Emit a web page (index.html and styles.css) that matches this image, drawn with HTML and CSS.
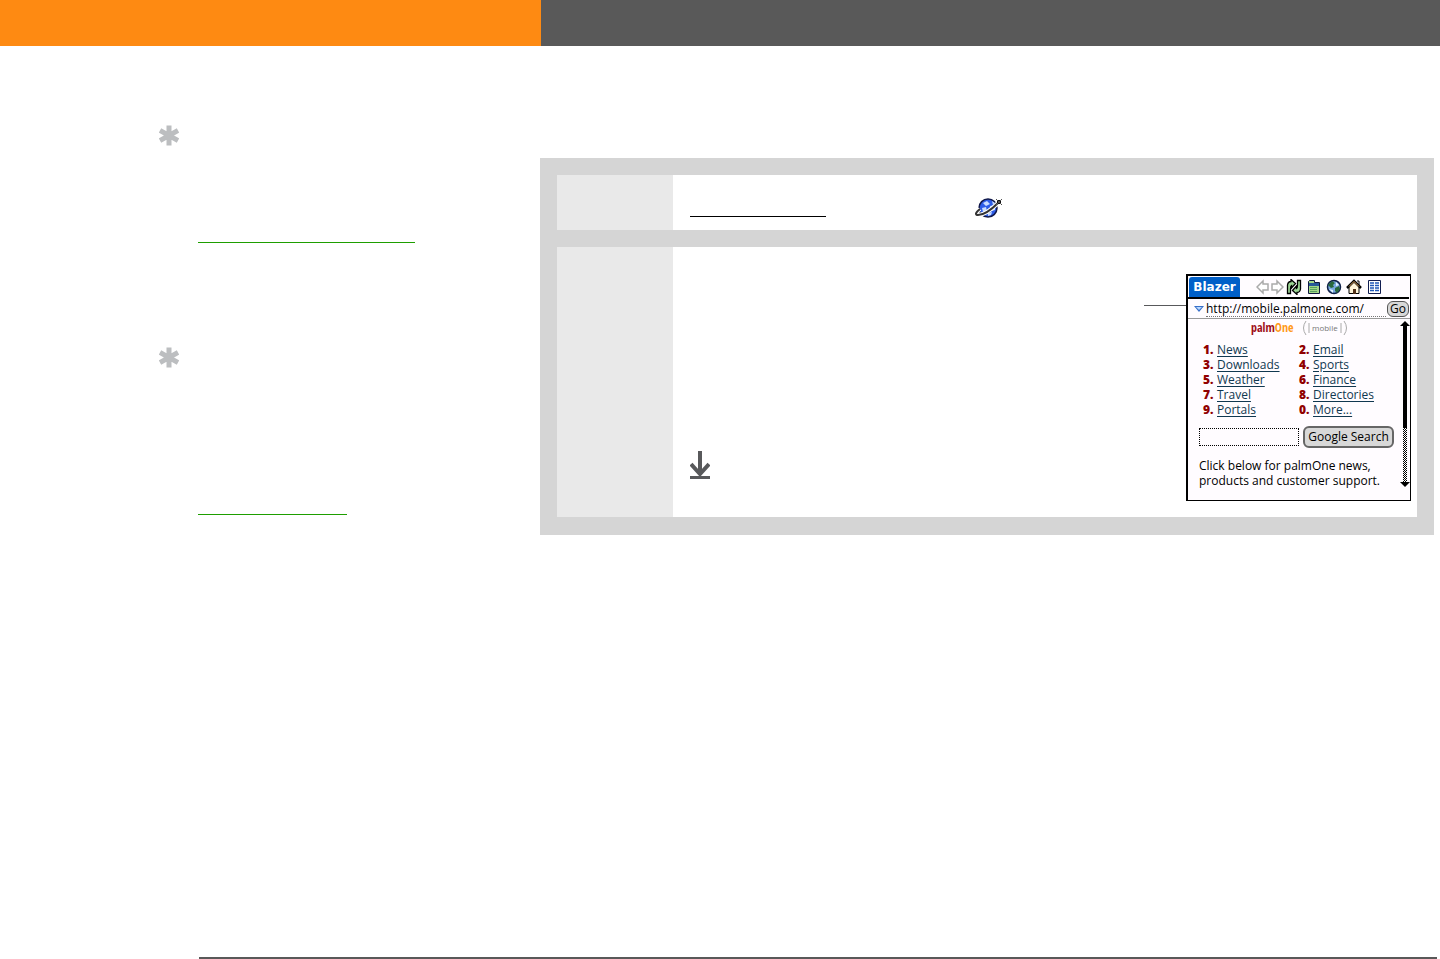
FILE: index.html
```html
<!DOCTYPE html>
<html lang="en">
<head>
    <meta charset="UTF-8">
    <meta name="viewport" content="width=device-width, initial-scale=1.0">
    <title>Blazer</title>
    <link rel="stylesheet" href="styles.css">
</head>
<body>
    <header class="top-bar">
        <div class="top-left"></div>
        <div class="top-right"></div>
    </header>

    <main class="content">
        <aside class="notes">
            <section class="note">
                <svg class="star" viewBox="0 0 20 20"><path d="M10 0V20M1 5L19 15M19 5L1 15"/></svg>
                <div class="note-link"></div>
            </section>
            <section class="note">
                <svg class="star" viewBox="0 0 20 20"><path d="M10 0V20M1 5L19 15M19 5L1 15"/></svg>
                <div class="note-link short"></div>
            </section>
        </aside>

        <div class="steps">
            <section class="step">
                <div class="step-label"></div>
                <div class="step-body first">
                    <div class="term-line"></div>
                    <svg class="web-icon" viewBox="0 0 28 22">
                        <circle cx="13" cy="11" r="9" fill="#2c5ce8" stroke="#10184a" stroke-width="1.5"/>
                        <path d="M8 6l4-2 3 3-4 2zM15 9l5-1 0 5-4 1zM7 11l4-1 1 4-4 1zM17 4l3 2-2 2zM13 16l4-1-1 3-3 1z" fill="#c8dcff"/>
                        <path d="M5 12C0 16 0 18 3 18C9 18 17 12 23 6" fill="none" stroke="#fff" stroke-width="4"/>
                        <path d="M5 12C0 16 0 18 3 18C9 18 17 12 23 6" fill="none" stroke="#333" stroke-width="2"/>
                        <path d="M22 3h4v4h-4z" fill="#111"/>
                        <path d="M21 2l6 6M27 2l-6 6" stroke="#555"/>
                    </svg>
                </div>
            </section>

            <section class="step">
                <div class="step-label"></div>
                <div class="step-body second">
                    <svg class="down-icon" viewBox="0 0 20 28"><path d="M10 0V23M1 13L10 23L19 13" fill="none" stroke="#58595b" stroke-width="4"/><path d="M0 25h20v3H0z" fill="#58595b"/></svg>
                    <div class="pointer"></div>
                    <div class="device">
                        <div class="title-bar">
                            <h1 class="app-name">Blazer</h1>
                            <div class="tools">
                                <button class="nav" aria-label="Back"><svg viewBox="0 0 14 16"><path d="M1 8L7 2V5H12V11H7V14Z" fill="#fff" stroke="#aaa" stroke-width="1.5"/></svg></button>
                                <button class="nav" aria-label="Forward"><svg viewBox="0 0 14 16"><path d="M13 8L7 2V5H2V11H7V14Z" fill="#fff" stroke="#aaa" stroke-width="1.5"/></svg></button>
                                <button class="tool" aria-label="Refresh"><svg viewBox="0 0 16 16"><path d="M1.500 14.500V6Q2 2.500 5 2.500V0.500L9.500 4.500L5.500 9V6.500Q4.500 7 4.500 10V14.500Z" fill="#9cd494" stroke="#000" stroke-width="1.300"/><path d="M14.500 1.500V10Q14 13.500 11 13.500V15.500L6.500 11.500L10.500 7V9.500Q11.500 9 11.500 6V1.500Z" fill="#9cd494" stroke="#000" stroke-width="1.300"/></svg></button>
                                <button class="tool" aria-label="Bookmarks"><svg viewBox="0 0 16 16"><path d="M2.500 2.500V14.500H13.500V3.500H8.500V1.500H3.500Z" fill="#a4d888" stroke="#101840"/><path d="M3 4h10v3H3z" fill="#285898"/><path d="M4 8.500h7M4 10.500h7M4 12.500h7" stroke="#58a060"/></svg></button>
                                <button class="tool" aria-label="Open page"><svg viewBox="0 0 16 16"><circle cx="8" cy="8" r="6.500" fill="#78a8e0" stroke="#102048" stroke-width="1.500"/><path d="M2 6L6 2L9 4L7 6L8 8L5 9ZM9 9L13 7L14 10L11 14L9 12Z" fill="#28683c"/><path d="M10 3l3 3-3 1zM3 10l4 1v3z" fill="#e4f4ff"/></svg></button>
                                <button class="tool" aria-label="Home"><svg viewBox="0 0 16 16"><path d="M3 8V14.500H13V8L8 3Z" fill="#fff4d8" stroke="#000"/><path d="M11 2h2v4" fill="none" stroke="#000"/><path d="M1 9L8 2L15 9" fill="none" stroke="#000" stroke-width="2.500"/><path d="M3 7.500L8 2.500L13 7.500" fill="none" stroke="#e8a860"/><path d="M7 10h3v5H7z" fill="#503018"/></svg></button>
                                <button class="tool" aria-label="Page view"><svg viewBox="0 0 16 16"><path d="M2.500 1.500H14.500V14.500H2.500Z" fill="#fff" stroke="#101c50"/><path d="M4 4h4M4 6.500h4M4 9h4M4 11.500h4M9 4h4M9 6.500h4M9 9h4M9 11.500h4" stroke="#2058b8" stroke-width="1.500"/></svg></button>
                            </div>
                        </div>

                        <form class="address-bar">
                            <svg class="drop" viewBox="0 0 10 6"><path d="M0 0H10L5 6Z" fill="#3870c8"/><path d="M2 1H8L5 4Z" fill="#b8d8ff"/></svg>
                            <input class="url" type="text" aria-label="Address" value="http://mobile.palmone.com/">
                            <button class="go" type="button">Go</button>
                        </form>

                        <div class="page">
                            <div class="page-main">
                                <div class="brand">
                                    <span class="logo">palm<span class="one">One</span></span>
                                    <span class="mobile"><svg viewBox="0 0 8 16"><path d="M4 1Q-1 8 4 15M7 3V13"/></svg>mobile<svg viewBox="0 0 8 16"><path d="M4 1Q9 8 4 15M1 3V13"/></svg></span>
                                </div>
                                <ul class="links">
                                    <li><b>1.</b><a href="#">News</a></li>
                                    <li><b>2.</b><a href="#">Email</a></li>
                                    <li><b>3.</b><a href="#">Downloads</a></li>
                                    <li><b>4.</b><a href="#">Sports</a></li>
                                    <li><b>5.</b><a href="#">Weather</a></li>
                                    <li><b>6.</b><a href="#">Finance</a></li>
                                    <li><b>7.</b><a href="#">Travel</a></li>
                                    <li><b>8.</b><a href="#">Directories</a></li>
                                    <li><b>9.</b><a href="#">Portals</a></li>
                                    <li><b>0.</b><a href="#">More...</a></li>
                                </ul>
                                <form class="search">
                                    <input type="text" aria-label="Search">
                                    <button type="button">Google Search</button>
                                </form>
                                <p class="blurb">Click below for palmOne news,<br>products and customer support.</p>
                            </div>
                            <div class="scrollbar">
                                <div class="arrow-up"></div>
                                <div class="thumb"></div>
                                <div class="track"></div>
                                <div class="arrow-down"></div>
                            </div>
                        </div>
                    </div>
                </div>
            </section>
        </div>
    </main>

    <footer class="page-rule"></footer>
</body>
</html>
```
FILE: styles.css
```css
* {
    box-sizing: border-box;
}
body {
    font-family: "Open Sans", "Noto Sans", sans-serif;
    font-size: 12px;
    font-weight: 500;
    line-height: 15px;
    color: #000;
    background-color: #fff;
    margin: 0;
    min-height: 100vh;
    display: flex;
    flex-direction: column;
}
svg {
    display: block;
}
button {
    font: inherit;
    color: inherit;
    padding: 0;
    cursor: pointer;
}
.top-bar {
    display: flex;
    height: 46px;
}
.top-left {
    width: 37.5%;
    border-right: 1px solid #fe8a12;
    box-sizing: content-box;
    background-color: #fe8a12;
}
.top-right {
    flex: 1;
    background-color: #595959;
}
.content {
    flex: 1;
    display: grid;
    grid-template-columns: 37.5% 1fr;
    align-items: start;
}

/* side notes */
.notes {
    padding: 79px 0 0 159px;
}
.note {
    margin-bottom: 104px;
}
.star {
    width: 20px;
    height: 21px;
    fill: none;
    stroke: #bcbec0;
    stroke-width: 5;
}
.note-link {
    width: 217px;
    height: 97px;
    margin-left: 39px;
    border-bottom: 1px solid #1e9e00;
}
.note-link.short {
    width: 149px;
    height: 147px;
}

/* steps */
.steps {
    margin: 112px 6px 0 0;
    padding: 17px 17px 18px;
    background-color: #d5d5d5;
    display: grid;
    gap: 17px;
}
.step {
    display: grid;
    grid-template-columns: 116px 1fr;
    background-color: #fff;
}
.step-label {
    background-color: #e9e9e9;
}
.step-body {
    display: flex;
    padding-left: 17px;
}
.step-body.first {
    padding-top: 22px;
    padding-bottom: 11px;
}
.step-body.second {
    padding: 27px 6px 16px 17px;
}
.term-line {
    width: 136px;
    height: 20px;
    border-bottom: 1px solid #000;
}
.web-icon {
    width: 28px;
    height: 22px;
    margin-left: 149px;
}
.down-icon {
    width: 20px;
    height: 28px;
    align-self: flex-end;
    margin-bottom: 22px;
}
.pointer {
    width: 42px;
    height: 32px;
    margin-left: auto;
    border-bottom: 1px solid #58595b;
}

/* handheld screen */
.device {
    width: 225px;
    border: 1px solid #000;
    border-width: 2px 1px 1px 2px;
    background-color: #fffcff;
}
.title-bar {
    display: flex;
    height: 23px;
    padding: 1px 0 0 1px;
    border-bottom: 2px solid #000;
    margin-right: 1px;
}
.app-name {
    width: 51px;
    margin: 0;
    border-radius: 3px 3px 0 0;
    background-color: #0060c8;
    color: #fff;
    font-family: "DejaVu Sans", sans-serif;
    font-size: 12px;
    line-height: 20px;
    text-align: center;
}
.tools {
    display: flex;
    align-items: center;
    margin-left: 16px;
}
.tools button {
    width: 20px;
    border: 0;
    background: none;
}
.tools .nav {
    width: 14px;
}
.tools svg {
    width: 16px;
    height: 16px;
    margin: 0 auto;
}
.tools .nav svg {
    width: 14px;
}
.address-bar {
    display: flex;
    align-items: center;
    height: 20px;
    padding: 0 1px 0 6px;
    border-bottom: 1px solid #999;
}
.drop {
    width: 10px;
    height: 6px;
}
.url {
    flex: 1;
    min-width: 0;
    height: 16px;
    margin: 0 1px 0 2px;
    padding: 0;
    border: 0;
    border-bottom: 1px dotted #777;
    background: none;
    color: #000;
    font: inherit;
}
.go {
    width: 22px;
    height: 16px;
    border: 1px solid #555;
    border-radius: 6px;
    background-color: #d8d8d8;
    line-height: 14px;
}
.page {
    display: flex;
}
.page-main {
    flex: 1;
    padding: 0 0 12px 11px;
}
.brand {
    display: flex;
    align-items: center;
    gap: 14px;
    height: 17px;
    padding-left: 52px;
}
.logo {
    width: 37px;
    font-family: "Liberation Sans Narrow", "Open Sans Condensed", "Open Sans", sans-serif;
    font-size: 12px;
    font-weight: bold;
    color: #a01018;
}
.one {
    color: #ff9a18;
}
.mobile {
    display: flex;
    align-items: center;
    gap: 2px;
    font-size: 8px;
    color: #777;
}
.mobile svg {
    width: 8px;
    height: 16px;
    fill: none;
    stroke: #aaa;
}
.links {
    display: grid;
    grid-template-columns: 96px 1fr;
    margin: 0;
    padding: 6px 0 0 4px;
    list-style: none;
}
.links li {
    display: flex;
}
.links b {
    width: 14px;
    font-weight: 800;
    color: #900000;
}
.links a {
    color: #103850;
    text-underline-offset: 2px;
}
.search {
    display: flex;
    align-items: center;
    gap: 4px;
    margin-top: 9px;
}
.search input {
    width: 100px;
    height: 18px;
    border: 1px dotted #000;
    background: none;
}
.search button {
    width: 91px;
    height: 22px;
    border: 2px solid #666;
    border-radius: 6px;
    background-color: #d8d8d8;
    line-height: 16px;
    white-space: nowrap;
}
.blurb {
    margin: 10px 0 0;
    white-space: nowrap;
}
.scrollbar {
    width: 11px;
    display: flex;
    flex-direction: column;
    align-items: center;
    padding: 2px 0 13px;
}
.arrow-up,
.arrow-down {
    border: 5px solid transparent;
    border-top-width: 0;
    border-bottom-color: #000;
}
.arrow-down {
    border-width: 5px 5px 0;
    border-top-color: #000;
}
.thumb {
    width: 4px;
    height: 102px;
    background-color: #000;
}
.track {
    width: 4px;
    flex: 1;
    background: repeating-conic-gradient(#000 0 25%, #fff 0 50%) 0 0 / 2px 2px;
}

.page-rule {
    margin: 0 3px 0 199px;
    border-bottom: 2px solid #595959;
}
```
